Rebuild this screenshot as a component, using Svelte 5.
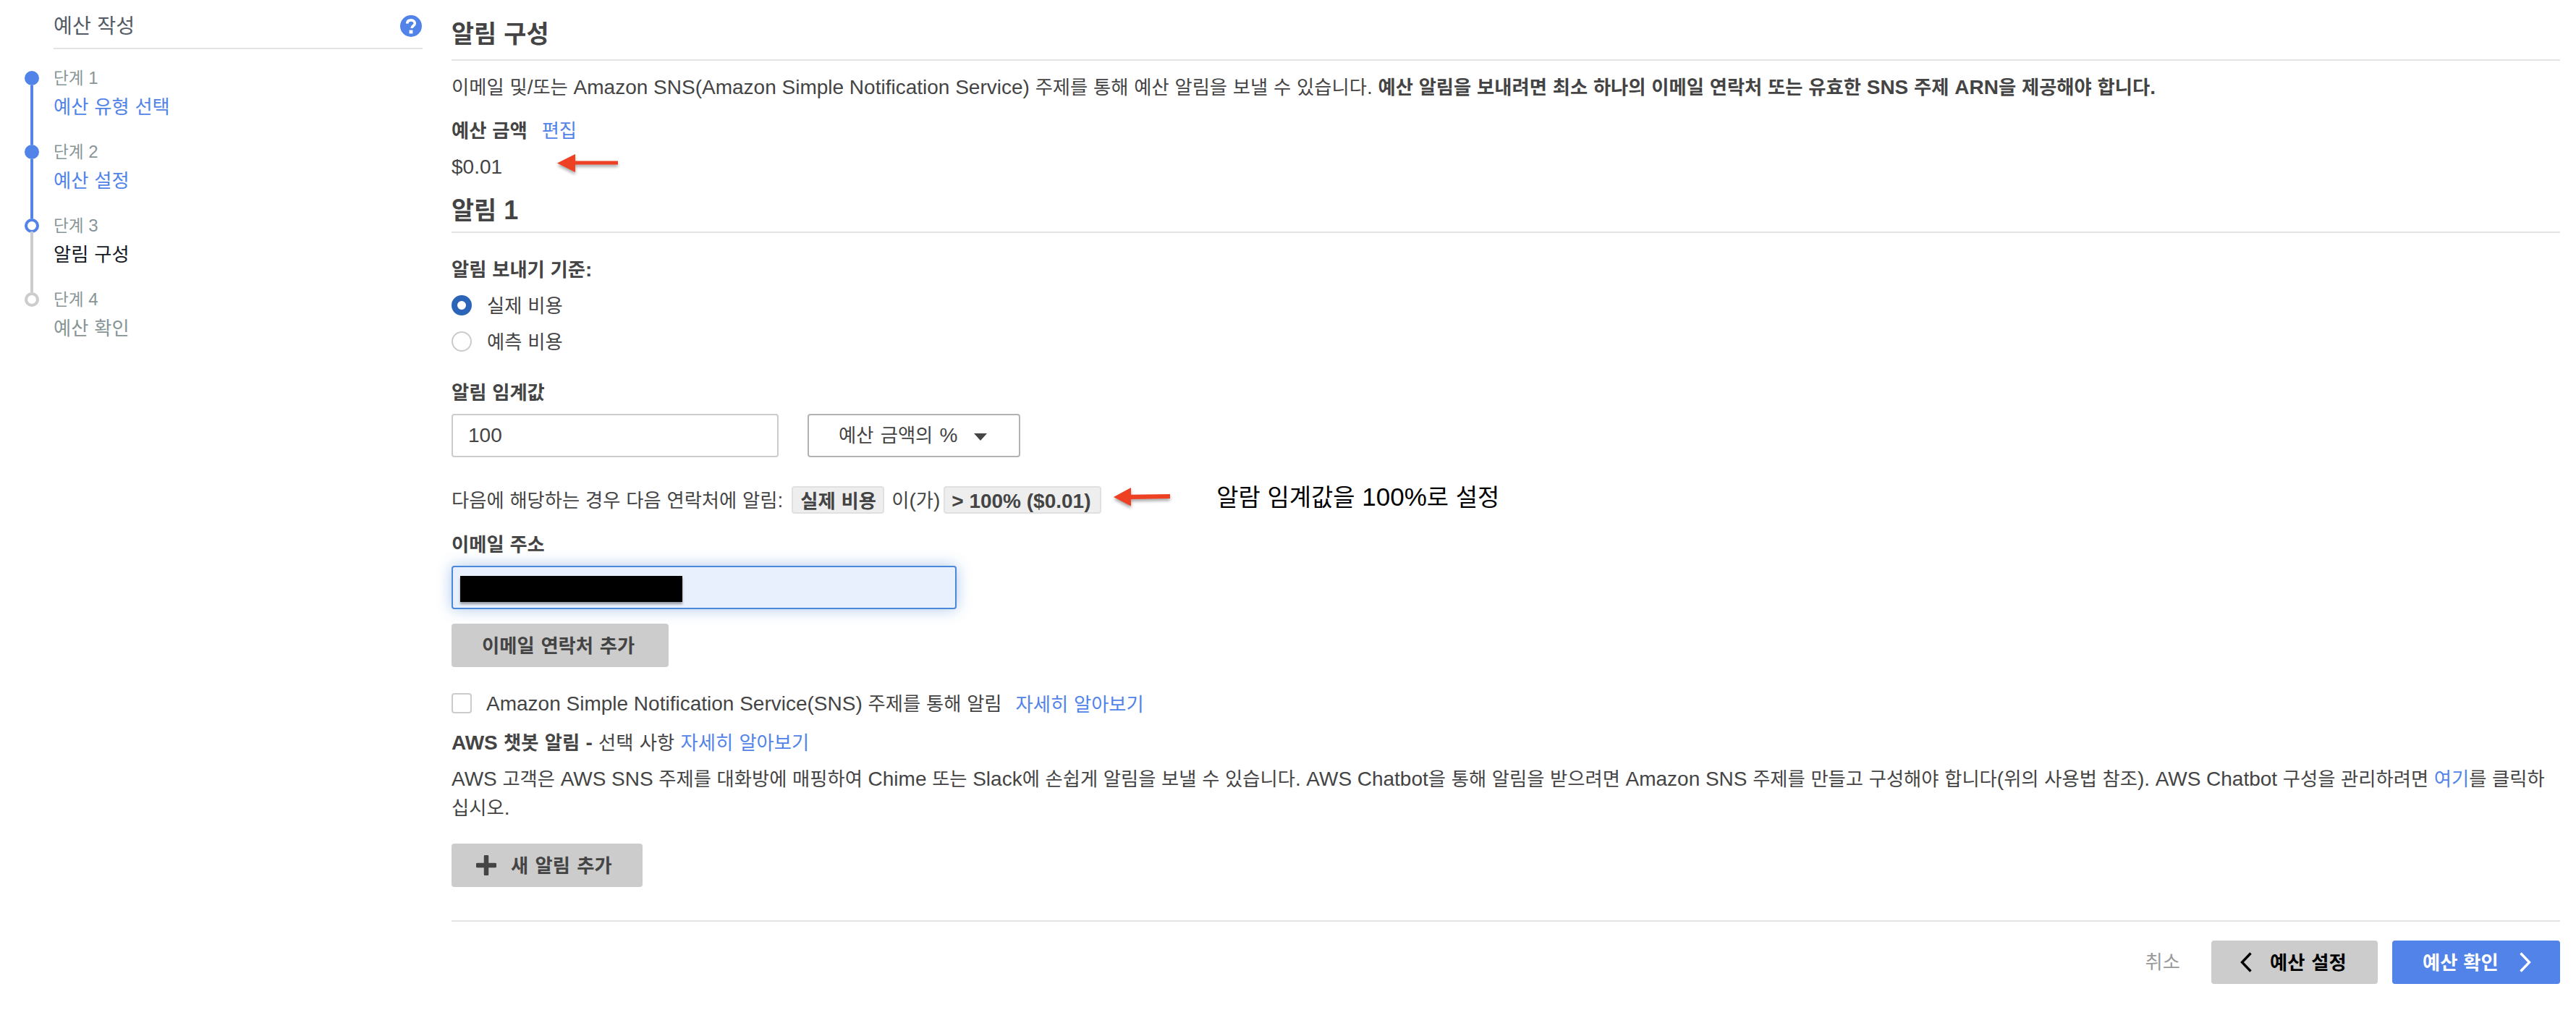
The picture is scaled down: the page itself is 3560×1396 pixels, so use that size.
<script>
  const steps = [
    { label: '단계 1', title: '예산 유형 선택', state: 'done' },
    { label: '단계 2', title: '예산 설정', state: 'done' },
    { label: '단계 3', title: '알림 구성', state: 'current' },
    { label: '단계 4', title: '예산 확인', state: 'todo' }
  ];

  // Splits a string so that Hangul runs can be set slightly smaller than Latin ones.
  function runs(text) {
    return text
      .split(/([가-힣]+)/)
      .filter(Boolean)
      .map((value) => ({ value, hangul: /[가-힣]/.test(value) }));
  }
</script>

{#snippet t(text)}{#each runs(text) as run}{#if run.hangul}<span class="ko">{run.value}</span>{:else}{run.value}{/if}{/each}{/snippet}

<div class="page">
  <nav class="sidebar">
    <header class="side-head">
      <span>{@render t('예산 작성')}</span>
      <svg class="help" viewBox="0 0 30 30">
        <circle cx="15" cy="15" r="15" fill="#5183e8" />
        <path d="M9.7 11.6C9.8 8.6 12 6.9 15.1 6.9c3 0 5.2 1.7 5.2 4.3 0 3.6-4.3 3.5-4.3 6.8" fill="none" stroke="#fff" stroke-width="3.6" />
        <rect x="12.6" y="20.6" width="4.8" height="4.8" fill="#fff" />
      </svg>
    </header>
    <ol class="steps">
      {#each steps as step}
        <li class="step {step.state}">
          <div class="rail"><i class="dot"></i><i class="line"></i></div>
          <div class="step-text">
            <span class="step-label">{@render t(step.label)}</span>
            <span class="step-title">{@render t(step.title)}</span>
          </div>
        </li>
      {/each}
    </ol>
  </nav>

  <main>
    <h1>{@render t('알림 구성')}</h1>
    <p class="intro">{@render t('이메일 및/또는 Amazon SNS(Amazon Simple Notification Service) 주제를 통해 예산 알림을 보낼 수 있습니다. ')}<b>{@render t('예산 알림을 보내려면 최소 하나의 이메일 연락처 또는 유효한 SNS 주제 ARN을 제공해야 합니다.')}</b></p>
    <p class="budget"><b>{@render t('예산 금액')}</b><a class="link">{@render t('편집')}</a></p>
    <div class="amount">
      <span>$0.01</span>
      <svg class="arrow" viewBox="0 0 84 26"><path d="M0 12.5 25 0v9.5h59v5H25V25z" fill="#ee4023" /></svg>
    </div>
    <h2>{@render t('알림 1')}</h2>

    <p class="criteria"><b>{@render t('알림 보내기 기준:')}</b></p>
    <label class="radio-row"><i class="radio on"></i><span>{@render t('실제 비용')}</span></label>
    <label class="radio-row"><i class="radio"></i><span>{@render t('예측 비용')}</span></label>

    <p class="threshold"><b>{@render t('알림 임계값')}</b></p>
    <div class="fields">
      <div class="input">100</div>
      <div class="select">
        <span>{@render t('예산 금액의 %')}</span>
        <svg class="caret" viewBox="0 0 18 10"><path d="M0 0h18L9 10z" fill="#444" /></svg>
      </div>
    </div>

    <div class="summary">
      <span>{@render t('다음에 해당하는 경우 다음 연락처에 알림:')}</span>
      <b class="tag cost">{@render t('실제 비용')}</b>
      <span class="joiner">{@render t('이(가)')}</span>
      <b class="tag limit">&gt; 100% ($0.01)</b>
      <svg class="arrow small" viewBox="0 0 78 26"><path d="M0 13 24 0v9.7L78 9v6l-54 1v9.5z" fill="#ee4023" /></svg>
      <span class="note">{@render t('알람 임계값을 100%로 설정')}</span>
    </div>

    <p class="mail-label"><b>{@render t('이메일 주소')}</b></p>
    <div class="mail"><div class="redacted"></div></div>
    <div class="btn grey add-mail"><span>{@render t('이메일 연락처 추가')}</span></div>

    <div class="sns">
      <i class="checkbox"></i>
      <span>{@render t('Amazon Simple Notification Service(SNS) 주제를 통해 알림')}</span>
      <a class="link">{@render t('자세히 알아보기')}</a>
    </div>
    <p class="chatbot"><b>{@render t('AWS 챗봇 알림 - ')}</b>{@render t('선택 사항 ')}<a class="link">{@render t('자세히 알아보기')}</a></p>
    <p class="chat-info">{@render t('AWS 고객은 AWS SNS 주제를 대화방에 매핑하여 Chime 또는 Slack에 손쉽게 알림을 보낼 수 있습니다. AWS Chatbot을 통해 알림을 받으려면 Amazon SNS 주제를 만들고 구성해야 합니다(위의 사용법 참조). AWS Chatbot 구성을 관리하려면 ')}<a class="link">{@render t('여기')}</a>{@render t('를 클릭하')}<br />{@render t('십시오.')}</p>

    <div class="btn grey add-alert">
      <svg class="plus" viewBox="0 0 28 28"><path d="M14 2v24M2 14h24" stroke="#444" stroke-width="6.5" stroke-linecap="round" /></svg>
      <span>{@render t('새 알림 추가')}</span>
    </div>

    <footer>
      <span class="cancel">{@render t('취소')}</span>
      <div class="btn grey prev">
        <svg class="chev" viewBox="0 0 16 28"><path d="M14.5 1.5 2.5 14l12 12.5" fill="none" stroke="#000" stroke-width="3.4" /></svg>
        <span>{@render t('예산 설정')}</span>
      </div>
      <div class="btn blue">
        <span>{@render t('예산 확인')}</span>
        <svg class="chev" viewBox="0 0 16 28"><path d="M1.5 1.5 13.5 14l-12 12.5" fill="none" stroke="#fff" stroke-width="3.4" /></svg>
      </div>
    </footer>
  </main>
</div>

<style>
  :global(body) { background: #fff; }
  .page {
    display: flex;
    box-sizing: border-box;
    width: 3560px;
    height: 1396px;
    overflow: hidden;
    font: 28px/40px "Liberation Sans", "Noto Sans CJK KR", sans-serif;
    color: #444;
    white-space: nowrap;
  }
  .page * { box-sizing: border-box; }
  .ko { font-family: "Noto Sans CJK KR", sans-serif; font-size: 0.94em; line-height: 0; }
  p, h1, h2, ol { margin: 0; padding: 0; }
  p { padding-top: 1px; margin-bottom: -1px; }
  i { display: block; flex: none; }
  svg { display: block; flex: none; }
  .link { color: #5183e8; }

  .sidebar { width: 624px; flex: none; padding-right: 40px; }
  .side-head {
    display: flex;
    justify-content: space-between;
    align-items: center;
    height: 68px;
    margin-left: 74px;
    padding: 6px 1px 0 0;
    border-bottom: 2px solid #e4e4e4;
    font-size: 30px;
    color: #545b64;
  }
  .help { width: 30px; height: 30px; }
  .steps { list-style: none; margin: 30px 0 0 34px; }
  .step { display: flex; height: 102px; }
  .rail { display: flex; flex-direction: column; align-items: center; width: 20px; margin-right: 20px; }
  .dot { width: 20px; height: 20px; border-radius: 50%; border: 4px solid #5183e8; }
  .done .dot { background: #5183e8; }
  .todo .dot { border-color: #ccc; }
  .line { width: 4px; height: 82px; background: #5183e8; }
  .current .line { background: #ccc; height: 84px; margin-top: -2px; }
  .todo .line { display: none; }
  .step-text { display: flex; flex-direction: column; margin-top: -10px; }
  .step-label { font-size: 24px; color: #879596; }
  .step-title { color: #5183e8; }
  .current .step-title { color: #16191f; }
  .todo .step-title { color: #879596; }

  main { width: 2914px; flex: none; }
  h1, h2 { font-size: 36px; font-weight: 700; border-bottom: 2px solid #e4e4e4; }
  h1 { height: 84px; padding-top: 27px; }
  h2 { height: 54px; padding-top: 3px; }
  .intro { margin-top: 16px; }
  .budget { display: flex; gap: 20px; margin-top: 20px; }
  .amount { display: flex; height: 40px; margin: 11px 0 17px; }
  .arrow { width: 84px; height: 26px; margin: 2px 0 0 76px; overflow: visible; filter: drop-shadow(0 3px 2px rgb(0 0 0 / 0.35)); }
  .criteria { margin-top: 30px; }
  .radio-row { display: flex; align-items: center; gap: 21px; height: 40px; margin-top: 10px; }
  .radio-row span, .sns span:not(.ko), .btn > span { padding-top: 1px; }
  .radio { width: 28px; height: 28px; border: 2px solid #ccc; border-radius: 50%; }
  .radio.on { border: 8px solid #2c65b8; }
  .threshold { margin-top: 30px; }
  .fields { display: flex; gap: 40px; margin-top: 10px; }
  .input, .select { display: flex; align-items: center; height: 60px; border-radius: 4px; }
  .input { width: 452px; padding-left: 21px; border: 2px solid #ccc; }
  .select { width: 294px; padding-left: 41px; border: 2px solid #b3b3b3; word-spacing: 1.5px; }
  .caret { width: 18px; height: 10px; margin: 4px 0 0 22px; }

  .summary { display: flex; align-items: center; height: 40px; margin-top: 39px; }
  .summary > span:first-child, .joiner { padding-top: 1px; }
  .tag { height: 38px; padding: 0 10px; line-height: 37px; background: #eee; border: 2px solid #e0e0e0; border-radius: 4px; }
  .cost { margin-left: 12px; width: 128px; }
  .joiner { width: 62px; margin: 0 10px; }
  .limit { width: 218px; padding-left: 9px; }
  .small { width: 78px; margin: -9px 0 0 17px; }
  .note { margin: -8px 0 0 64px; font-size: 35px; color: #000; }

  .mail-label { margin-top: 21px; }
  .mail {
    width: 698px;
    height: 60px;
    margin-top: 10px;
    padding: 12px 10px;
    background: #e8effd;
    border: 2px solid #4a88d9;
    border-radius: 4px;
    box-shadow: 0 0 20px rgb(74 136 217 / 0.45);
  }
  .redacted { width: 307px; height: 36px; background: #000; box-shadow: 0 3px 3px rgb(0 0 0 / 0.35); }

  .btn { display: flex; align-items: center; height: 60px; border-radius: 4px; font-weight: 700; }
  .grey { background: #ccc; }
  .blue { width: 232px; padding-left: 42px; justify-content: space-between; padding-right: 40px; margin-left: 20px; background: #5183e8; color: #fff; }
  .add-mail { width: 300px; margin-top: 20px; padding-left: 42px; word-spacing: 1px; }
  .sns { display: flex; align-items: center; height: 40px; margin-top: 30px; }
  .checkbox { width: 28px; height: 28px; margin-right: 20px; border: 2px solid #ccc; border-radius: 4px; }
  .sns .link { margin: 3px 0 0 19px; }
  .chatbot { margin-top: 14px; word-spacing: 0.5px; }
  .chat-info { margin-top: 10px; word-spacing: -0.13px; }
  .add-alert { width: 264px; margin-top: 30px; padding-left: 34px; gap: 20px; word-spacing: 1.5px; }
  .plus { width: 28px; height: 28px; }

  footer { display: flex; align-items: center; justify-content: flex-end; margin-top: 46px; padding-top: 26px; border-top: 2px solid #e4e4e4; }
  .cancel { color: #999; margin-right: 43px; }
  .prev { width: 230px; padding-left: 40px; gap: 25px; color: #000; word-spacing: 1px; }
  .chev { width: 16px; height: 28px; }
</style>
